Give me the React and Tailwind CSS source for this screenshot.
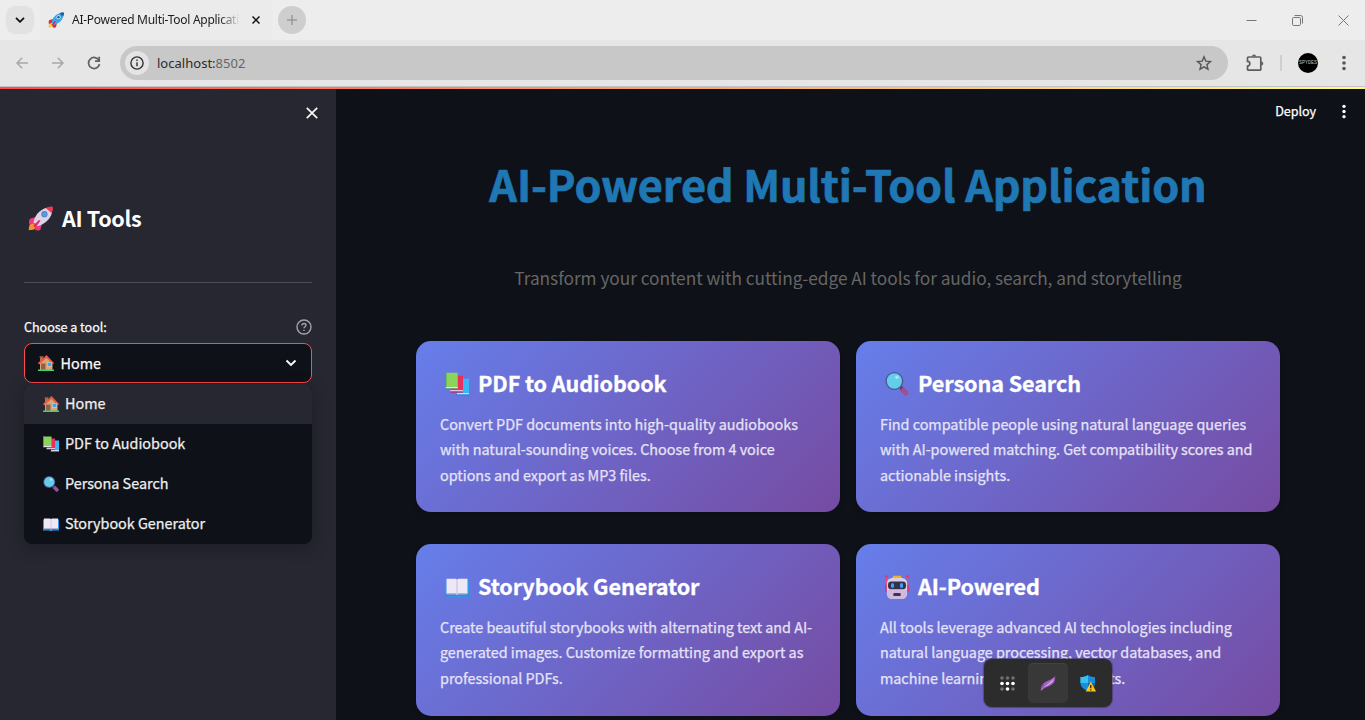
import React from "react";

const Rocket = ({ className, blue }) => (
  <svg viewBox="0 0 32 32" className={className}>
    <path d="M1 31c0-5 1-9 5-10l5 5c-1 4-5 5-10 5z" fill={blue ? "#ffc83d" : "#f7932f"} />
    <path d="M10 14 3 16c-2 2-2 5-1 8l8-3zM18 22l-2 8c-2 2-4 1-7 1l2-8z" fill={blue ? "#d92b3a" : "#f0387f"} />
    <path d="M7 21C9 10 18 2 28 2c3 0 3 1 3 3 0 9-8 18-19 21z" fill={blue ? "#3da5e8" : "#dcd3e8"} />
    <path d="M23 3c3-2 6-3 8-2s1 4-1 8z" fill={blue ? "#1f5f9e" : "#ef3a52"} />
    <path d="m7 25 7-7 2 1-7 9z" fill={blue ? "#d92b3a" : "#d92c6c"} />
    <circle cx="21" cy="10.500" r="4" fill={blue ? "#e6f3fc" : "#5f7fbd"} />
    <circle cx="21" cy="10.500" r="2.600" fill={blue ? "#235a93" : "#49a4ee"} />
  </svg>
);

const House = ({ className }) => (
  <svg viewBox="0 0 32 32" className={className}>
    <path d="M4 3h6v12H4z" fill="#b0705a" />
    <path d="M3 2h8v3H3z" fill="#7f5145" />
    <path d="M4 16 17 4l12 12v14H4z" fill="#dea273" />
    <path d="M17 0 0 16l2 3L17 6l13 13 2-3z" fill="#ee5a3d" />
    <path d="M6 17h9v13H6z" fill="#8f5f50" />
    <path d="M18 14h10v9H18z" fill="#f3d4b0" />
    <path d="M19 15h8v7h-8z" fill="#3aa7f4" />
    <path d="M0 29h32v3H0z" fill="#41d36b" />
  </svg>
);

const Books = ({ className }) => (
  <svg viewBox="0 0 32 32" className={className}>
    <path d="M16 9h16v22H16z" fill="#38b6f5" />
    <path d="M16 28h16v2H16z" fill="#d9d2ee" />
    <path d="M15 30h17v1.500H15z" fill="#1c82cc" />
    <path d="M8 5h16v21H8z" fill="#ea2e60" />
    <path d="M7 24h17v2H7z" fill="#dcc5e0" />
    <path d="M7 26h17v1.500H7z" fill="#b52668" />
    <path d="M0 1h17v19H0z" fill="#8bd45c" />
    <path d="M0 1h2v20H0z" fill="#4ba34c" />
    <path d="M1 20h16v2H1z" fill="#e9e3ee" />
    <path d="M0 22h16v1H0z" fill="#3f8c60" />
  </svg>
);

const Glass = ({ className }) => (
  <svg viewBox="0 0 32 32" className={className}>
    <path d="m21 20 3-1 7 7c2 3-2 7-5 5l-7-7z" fill="#995298" />
    <path d="m19 21 3-3 2 3-3 3z" fill="#57436e" />
    <circle cx="12.500" cy="12" r="12" fill="#4a5792" />
    <circle cx="12.500" cy="12" r="10.200" fill="#63cdea" />
    <circle cx="16" cy="7" r="2.400" fill="#a9e5f6" />
  </svg>
);

const OpenBook = ({ className }) => (
  <svg viewBox="0 0 32 32" className={className}>
    <path d="M0 7h32v22H19l-1 1h-4l-1-1H0z" fill="#2a9be8" />
    <path d="M0 26h32v1H0z" fill="#1d72c5" />
    <path d="M2 5h12l2 1 2-1h12v20H18l-2 1-2-1H2z" fill="#eee7f5" />
    <path d="M15.300 6h1.400v20h-1.400z" fill="#c9bdda" />
    <path d="M2 24h12l2 1 2-1h12v2H18l-2 1-2-1H2z" fill="#bdb1d0" />
  </svg>
);

const Robot = ({ className }) => (
  <svg viewBox="0 0 32 32" className={className}>
    <path d="M1 2h2v20H1zM29 2h2v20h-2z" fill="#e24b7a" />
    <circle cx="2" cy="2" r="1.700" fill="#f0325b" />
    <circle cx="30" cy="2" r="1.700" fill="#f0325b" />
    <path d="M0 13h4v10H2c-2 0-2-2-2-3zM28 13h4v7c0 1 0 3-2 3h-2z" fill="#c93d78" />
    <path d="M11 1h10l2 4H9z" fill="#f2b126" />
    <rect x="2.500" y="4" width="27" height="28" rx="7" fill="#dccfe5" />
    <path d="M3 20h26v5c0 4-3 7-7 7H10c-4 0-7-3-7-7z" fill="#cfb9dc" />
    <rect x="4" y="8.500" width="24" height="10.500" rx="4.500" fill="#36304f" />
    <rect x="8" y="11" width="4" height="6" rx="1.500" fill="#36a8ef" />
    <rect x="20" y="11" width="4" height="6" rx="1.500" fill="#36a8ef" />
    <rect x="11" y="24" width="10" height="4" rx="1.500" fill="#3a3352" />
  </svg>
);

const options = [
  { Icon: House, label: "Home", active: true },
  { Icon: Books, label: "PDF to Audiobook" },
  { Icon: Glass, label: "Persona Search" },
  { Icon: OpenBook, label: "Storybook Generator" },
];

const cards = [
  {
    Icon: Books,
    title: "PDF to Audiobook",
    lines: [
      "Convert PDF documents into high-quality audiobooks",
      "with natural-sounding voices. Choose from 4 voice",
      "options and export as MP3 files.",
    ],
  },
  {
    Icon: Glass,
    title: "Persona Search",
    lines: [
      "Find compatible people using natural language queries",
      "with AI-powered matching. Get compatibility scores and",
      "actionable insights.",
    ],
  },
  {
    Icon: OpenBook,
    title: "Storybook Generator",
    lines: [
      "Create beautiful storybooks with alternating text and AI-",
      "generated images. Customize formatting and export as",
      "professional PDFs.",
    ],
  },
  {
    Icon: Robot,
    title: "AI-Powered",
    lines: [
      "All tools leverage advanced AI technologies including",
      "natural language processing, vector databases, and",
      "machine learning for optimal results.",
    ],
  },
];

const Dots = ({ className }) => (
  <svg viewBox="0 0 4 16" className={className} fill="currentColor">
    <circle cx="2" cy="2.500" r="1.800" />
    <circle cx="2" cy="8" r="1.800" />
    <circle cx="2" cy="13.500" r="1.800" />
  </svg>
);

function Browser() {
  return (
    <header className="h-[87px] shrink-0 bg-[#e6e6e6] font-['Noto_Sans',sans-serif]">
      <div className="flex h-10 items-center bg-[#ededed]">
        <div className="ml-1.5 flex size-7 items-center justify-center rounded-[9px] bg-[#e2e2e2]">
          <svg viewBox="0 0 10 6" className="h-[6px] w-[10px]" fill="none" stroke="#111" strokeWidth="1.800">
            <path d="m1 .8 4 4 4-4" />
          </svg>
        </div>
        <div className="ml-1.5 flex h-10 w-[232px] items-center bg-[#ebebeb] pl-2">
          <Rocket blue className="size-4" />
          <div className="ml-2 w-[168px] whitespace-nowrap text-[12px] leading-4 tracking-[-0.270px] text-[#1c1c1c] [mask-image:linear-gradient(to_right,#000_88%,transparent)]">
            AI-Powered Multi-Tool Applicati
          </div>
          <svg viewBox="0 0 8 8" className="ml-3 size-2" stroke="#111" strokeWidth="1.500">
            <path d="m.5.5 7 7M7.500.5l-7 7" />
          </svg>
        </div>
        <div className="ml-1.5 flex size-7 items-center justify-center rounded-full bg-[#cecece]">
          <svg viewBox="0 0 12 12" className="size-3" stroke="#9a9a9a" strokeWidth="1.500">
            <path d="M6 1v10M1 6h10" />
          </svg>
        </div>
        <div className="ml-auto mr-4 flex items-center gap-[35px] text-[#777]">
          <svg viewBox="0 0 11 11" className="size-[11px]" stroke="currentColor">
            <path d="M.5 5.500h10" />
          </svg>
          <svg viewBox="0 0 11 11" className="size-[11px]" fill="none" stroke="currentColor">
            <rect x=".5" y="2.500" width="8" height="8" rx="1.200" />
            <path d="M2.500 .5h6a2 2 0 0 1 2 2v6" />
          </svg>
          <svg viewBox="0 0 11 11" className="size-[11px]" stroke="currentColor">
            <path d="m.5.5 10 10M10.500.5l-10 10" />
          </svg>
        </div>
      </div>
      <div className="flex h-[46px] items-center">
        <svg viewBox="0 0 12 12" className="ml-4 size-3" fill="none" stroke="#a8a8a8" strokeWidth="1.500">
          <path d="M12 6H1M6.200.8 1 6l5.200 5.200" />
        </svg>
        <svg viewBox="0 0 12 12" className="ml-6 size-3" fill="none" stroke="#a8a8a8" strokeWidth="1.500">
          <path d="M0 6h11M5.800.8 11 6l-5.200 5.200" />
        </svg>
        <svg viewBox="0 0 14 14" className="ml-[23px] size-3.5" fill="none" stroke="#5f6165" strokeWidth="1.700">
          <path d="M12 4.500A5.500 5.500 0 1 0 12.500 8" />
          <path d="M12.200.8v4.400H8" />
        </svg>
        <div className="ml-[19px] flex h-[34px] w-[1108px] items-center rounded-full bg-[#c8c8c8] pl-[5px] pr-4">
          <div className="flex size-6 items-center justify-center rounded-full bg-[#e4e4e4]">
            <svg viewBox="0 0 14 14" className="size-3.5" fill="none" stroke="#333" strokeWidth="1.400">
              <circle cx="7" cy="7" r="6.100" />
              <path d="M7 6.300v4M7 3.500v1.500" />
            </svg>
          </div>
          <div className="ml-2 text-[13px] leading-5 tracking-[0.020px] text-[#2b2b2b]">
            localhost:<span className="text-[#666]">8502</span>
          </div>
          <svg viewBox="0 0 16 16" className="ml-auto size-4" fill="none" stroke="#55575b" strokeWidth="1.400">
            <path d="m8 1.800 1.800 4.300 4.700.4-3.600 3.100 1.100 4.600L8 11.800l-4 2.400 1.100-4.600L1.500 6.500l4.700-.4z" />
          </svg>
        </div>
        <svg viewBox="0 0 18 18" className="ml-[18px] size-[18px]" fill="none" stroke="#5c5e62" strokeWidth="1.700">
          <path d="M2.500 3h11.300a1 1 0 0 1 1 1v11.200a1 1 0 0 1-1 1H2.500a1 1 0 0 1-1-1V12a2.200 2.200 0 0 0 0-4.600V4a1 1 0 0 1 1-1z" />
          <path d="M6 2.500a2 2 0 0 1 4 0zM15.300 7.500a2 2 0 0 1 0 4z" fill="#5c5e62" stroke="none" />
        </svg>
        <div className="ml-4 h-4 w-[2px] bg-[#cfcfcf]" />
        <div className="ml-4 flex size-5 items-center justify-center overflow-hidden rounded-full bg-black font-['Liberation_Mono',monospace] text-[5px] leading-none text-[#bbb]">
          SPYDES
        </div>
        <Dots className="ml-6 h-4 w-1 text-[#55575b]" />
      </div>
      <div className="h-px bg-[#c3c3c6]" />
    </header>
  );
}

function Sidebar() {
  return (
    <aside className="flex w-[336px] shrink-0 flex-col bg-[#262730] px-6">
      <div className="mt-[18px] flex h-3 justify-end">
        <svg viewBox="0 0 12 12" className="mr-[-6px] size-3" stroke="#fafafa" strokeWidth="1.700">
          <path d="m.8.8 10.400 10.400M11.200.8.8 11.200" />
        </svg>
      </div>
      <h2 className="mt-[83px] flex h-8 items-center pl-1 text-[21.600px] font-bold leading-8 text-white">
        <Rocket className="mr-[9px] mt-px size-[25px]" />
        <span className="tracking-[-0.350px]">AI Tools</span>
      </h2>
      <div className="mt-12 h-px bg-[#4c4d55]" />
      <div className="mt-[34px] flex h-5 items-center justify-between text-[12.600px] leading-5 text-[#fafafa]">
        <span className="tracking-[-0.050px] [-webkit-text-stroke:0.25px]">Choose a tool:</span>
        <svg viewBox="0 0 16 16" className="size-4" fill="none" stroke="#a3a4a9" strokeWidth="1.400">
          <circle cx="8" cy="8" r="7" />
          <path d="M6 6.500C6 5.200 6.900 4.500 8 4.500s2 .7 2 1.800c0 1.400-2 1.500-2 2.900M8 10.700v1.400" />
        </svg>
      </div>
      <div className="mt-1.5 flex h-10 items-center rounded-lg border border-[#ff4b4b] bg-[#0e1117] pl-[13px] pr-3.5 text-[14.400px] leading-6 text-[#fafafa]">
        <House className="size-4" />
        <span className="ml-[6.500px] [-webkit-text-stroke:0.25px]">Home</span>
        <svg viewBox="0 0 12 8" className="ml-auto h-2 w-3" fill="none" stroke="#fafafa" strokeWidth="1.900">
          <path d="m1.500 1.500 4.500 4.500 4.500-4.500" />
        </svg>
      </div>
      <ul className="mt-px h-40 overflow-hidden rounded-lg bg-[#0e1117] text-[14.400px] leading-6 text-[#eeeeee] shadow-[0_4px_16px_rgba(14,17,23,0.4)]">
        {options.map(({ Icon, label, active }) => (
          <li key={label} className={active ? "flex h-10 items-center bg-[#262730] pl-[19px]" : "flex h-10 items-center pl-[19px]"}>
            <Icon className="size-4" />
            <span className="mb-0.5 ml-1.5 tracking-[-0.020px] [-webkit-text-stroke:0.25px]">{label}</span>
          </li>
        ))}
      </ul>
    </aside>
  );
}

function Card({ Icon, title, lines }) {
  return (
    <section className="h-[171.400px] w-[424px] rounded-[15px] bg-[linear-gradient(135deg,#667eea_0%,#764ba2_100%)] px-6 pt-[26px] shadow-[0_4px_6px_rgba(0,0,0,0.1)]">
      <h3 className="flex h-8 items-center pl-[5px] text-[21.600px] font-bold leading-8 text-white">
        <Icon className="mr-[9px] mt-0.5 size-6" />
        <span className="tracking-[-0.090px] [-webkit-text-stroke:0.3px]">{title}</span>
      </h3>
      <p className="mt-[11.600px] text-[14.400px] leading-[25.600px] tracking-[-0.030px] text-[#e6e3f6] [-webkit-text-stroke:0.25px]">
        {lines.map((line) => (
          <span key={line} className="block whitespace-nowrap">
            {line}
          </span>
        ))}
      </p>
    </section>
  );
}

function Dock() {
  return (
    <div className="absolute left-[984px] top-[659px] flex h-12 w-32 items-center gap-0 rounded-lg bg-[#2c2c2c] px-1 shadow-[0_0_1px_1px_rgba(50,45,60,0.5)]">
      <div className="flex size-10 items-center justify-center">
        <svg viewBox="0 0 15 15" className="mr-px size-[15px]">
          {[2, 7.5, 13].map((y, r) =>
            [2, 7.5, 13].map((x, c) => (
              <circle key={x + "-" + y} cx={x} cy={y} r="1.800" fill={r === 1 || (r === 2 && c === 1) ? "#fff" : "#707070"} />
            ))
          )}
        </svg>
      </div>
      <div className="flex size-10 items-center justify-center rounded-[5px] border-t border-[#424242] bg-[#383838]">
        <svg viewBox="0 0 16 16" className="size-4">
          <path d="M1 15.500C0 10 3 7 7 5c3-1.500 6-2 8-5 1 5-1 8-5 10-3 1.500-7 2-9 5.500z" fill="#9350b4" />
          <path d="M3.500 11.500C6 9 9 8 14 3c-1 4-5 6-10.500 8.500z" fill="#e3c3f2" />
          <path d="M4 8.500C8 6 11 5.500 14 2 10 8 6 8 1.500 14" fill="none" stroke="#c48be0" strokeWidth=".7" />
        </svg>
      </div>
      <div className="flex size-10 items-center justify-center">
        <svg viewBox="0 0 16 17" className="h-[17px] w-4">
          <path d="M8 0c2 1.500 4 2 7 2v6c0 4-3 6.500-7 8-4-1.500-7.500-4-7.500-8V2C4 2 6 1.500 8 0z" fill="#168ddd" />
          <path d="M8 0v8H.5V2C4 2 6 1.500 8 0z" fill="#36c1f3" />
          <path d="M8 8h7c0 4-3 6.500-7 8z" fill="#0b62b8" />
          <path d="m10.800 6.500 5.200 10H5.800z" fill="#fcc419" />
          <path d="M10.800 10v3.200M10.800 14.200v1.300" stroke="#222" strokeWidth="1.300" />
        </svg>
      </div>
    </div>
  );
}

export default function App() {
  return (
    <div className="relative flex h-[720px] w-[1365px] flex-col overflow-hidden bg-[#0e1117] font-['Noto_Sans_CJK_SC',sans-serif]">
      <Browser />
      <div className="h-[2px] shrink-0 bg-[linear-gradient(90deg,#ff4b4b,#fffd80)]" />
      <div className="flex h-[631px]">
        <Sidebar />
        <main className="flex w-[1029px] flex-col overflow-hidden">
          <div className="flex h-11 items-center justify-end pr-[19px] text-white">
            <span className="text-[12.600px] leading-5 tracking-[-0.050px] [-webkit-text-stroke:0.25px]">Deploy</span>
            <Dots className="ml-[26px] h-[15px] w-1" />
          </div>
          <h1 className="mt-[17px] h-[66px] pr-[5px] text-center text-[43.200px] font-bold leading-[66px] tracking-[-0.140px] text-[#1f77b4] [-webkit-text-stroke:0.7px]">
            <span className="whitespace-nowrap">AI-Powered Multi-Tool Application</span>
          </h1>
          <p className="mt-[47px] h-[30px] pr-[5px] text-center text-[17.300px] leading-[30px] tracking-[-0.047px] text-[#666]">
            <span className="whitespace-nowrap">Transform your content with cutting-edge AI tools for audio, search, and storytelling</span>
          </p>
          <div className="ml-20 mt-12 grid w-[864px] grid-cols-2 gap-x-4 gap-y-[31.800px]">
            {cards.map((card) => (
              <Card key={card.title} {...card} />
            ))}
          </div>
        </main>
      </div>
      <Dock />
    </div>
  );
}
